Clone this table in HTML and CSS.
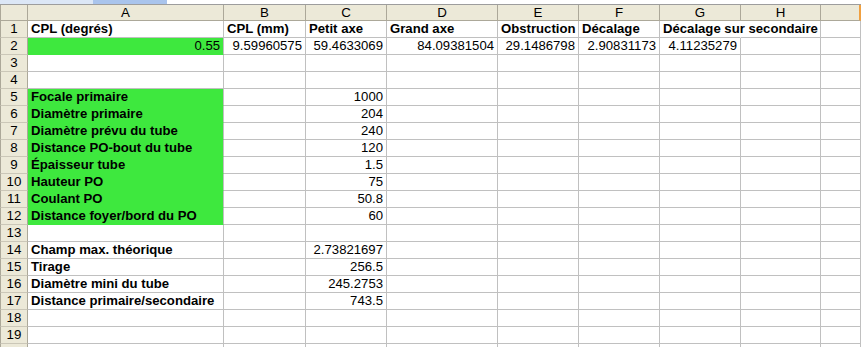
FILE: index.html
```html
<!DOCTYPE html>
<html lang="fr">
<head>
<meta charset="utf-8">
<title>Feuille</title>
<link rel="stylesheet" href="styles.css">
</head>
<body>
<div class="strip"><div class="tab-a"></div><div class="tab-b"></div></div>
<div class="sheet">
  <div class="ch corner"></div><div class="ch">A</div><div class="ch">B</div><div class="ch">C</div><div class="ch">D</div><div class="ch">E</div><div class="ch">F</div><div class="ch">G</div><div class="ch">H</div><div class="ch last"></div>

  <div class="rh">1</div><div class="c lbl">CPL (degrés)</div><div class="c lbl">CPL (mm)</div><div class="c lbl">Petit axe</div><div class="c lbl">Grand axe</div><div class="c lbl">Obstruction</div><div class="c lbl">Décalage</div><div class="c lbl wide spill">Décalage sur secondaire</div><div class="c"></div><div class="c"></div>

  <div class="rh">2</div><div class="c num green">0.55</div><div class="c num">9.59960575</div><div class="c num">59.4633069</div><div class="c num">84.09381504</div><div class="c num">29.1486798</div><div class="c num">2.90831173</div><div class="c num">4.11235279</div><div class="c"></div><div class="c"></div>

  <div class="rh">3</div><div class="c"></div><div class="c"></div><div class="c"></div><div class="c"></div><div class="c"></div><div class="c"></div><div class="c"></div><div class="c"></div><div class="c"></div>
  <div class="rh">4</div><div class="c"></div><div class="c"></div><div class="c"></div><div class="c"></div><div class="c"></div><div class="c"></div><div class="c"></div><div class="c"></div><div class="c"></div>

  <div class="rh">5</div><div class="c lbl green">Focale primaire</div><div class="c"></div><div class="c num">1000</div><div class="c"></div><div class="c"></div><div class="c"></div><div class="c"></div><div class="c"></div><div class="c"></div>
  <div class="rh">6</div><div class="c lbl green">Diamètre primaire</div><div class="c"></div><div class="c num">204</div><div class="c"></div><div class="c"></div><div class="c"></div><div class="c"></div><div class="c"></div><div class="c"></div>
  <div class="rh">7</div><div class="c lbl green">Diamètre prévu du tube</div><div class="c"></div><div class="c num">240</div><div class="c"></div><div class="c"></div><div class="c"></div><div class="c"></div><div class="c"></div><div class="c"></div>
  <div class="rh">8</div><div class="c lbl green">Distance PO-bout du tube</div><div class="c"></div><div class="c num">120</div><div class="c"></div><div class="c"></div><div class="c"></div><div class="c"></div><div class="c"></div><div class="c"></div>
  <div class="rh">9</div><div class="c lbl green">Épaisseur tube</div><div class="c"></div><div class="c num">1.5</div><div class="c"></div><div class="c"></div><div class="c"></div><div class="c"></div><div class="c"></div><div class="c"></div>
  <div class="rh">10</div><div class="c lbl green">Hauteur PO</div><div class="c"></div><div class="c num">75</div><div class="c"></div><div class="c"></div><div class="c"></div><div class="c"></div><div class="c"></div><div class="c"></div>
  <div class="rh">11</div><div class="c lbl green">Coulant PO</div><div class="c"></div><div class="c num">50.8</div><div class="c"></div><div class="c"></div><div class="c"></div><div class="c"></div><div class="c"></div><div class="c"></div>
  <div class="rh">12</div><div class="c lbl green">Distance foyer/bord du PO</div><div class="c"></div><div class="c num">60</div><div class="c"></div><div class="c"></div><div class="c"></div><div class="c"></div><div class="c"></div><div class="c"></div>

  <div class="rh">13</div><div class="c"></div><div class="c"></div><div class="c"></div><div class="c"></div><div class="c"></div><div class="c"></div><div class="c"></div><div class="c"></div><div class="c"></div>

  <div class="rh">14</div><div class="c lbl">Champ max. théorique</div><div class="c"></div><div class="c num">2.73821697</div><div class="c"></div><div class="c"></div><div class="c"></div><div class="c"></div><div class="c"></div><div class="c"></div>
  <div class="rh">15</div><div class="c lbl">Tirage</div><div class="c"></div><div class="c num">256.5</div><div class="c"></div><div class="c"></div><div class="c"></div><div class="c"></div><div class="c"></div><div class="c"></div>
  <div class="rh">16</div><div class="c lbl">Diamètre mini du tube</div><div class="c"></div><div class="c num">245.2753</div><div class="c"></div><div class="c"></div><div class="c"></div><div class="c"></div><div class="c"></div><div class="c"></div>
  <div class="rh">17</div><div class="c lbl">Distance primaire/secondaire</div><div class="c"></div><div class="c num">743.5</div><div class="c"></div><div class="c"></div><div class="c"></div><div class="c"></div><div class="c"></div><div class="c"></div>

  <div class="rh">18</div><div class="c"></div><div class="c"></div><div class="c"></div><div class="c"></div><div class="c"></div><div class="c"></div><div class="c"></div><div class="c"></div><div class="c"></div>
  <div class="rh">19</div><div class="c"></div><div class="c"></div><div class="c"></div><div class="c"></div><div class="c"></div><div class="c"></div><div class="c"></div><div class="c"></div><div class="c"></div>
  <div class="rh"></div><div class="c"></div><div class="c"></div><div class="c"></div><div class="c"></div><div class="c"></div><div class="c"></div><div class="c"></div><div class="c"></div><div class="c"></div>
</div>
</body>
</html>
```
FILE: styles.css
```css
html, body {
  margin: 0;
  padding: 0;
  background: #ffffff;
  overflow: hidden;
}
body {
  width: 861px;
  height: 347px;
  font-family: "Liberation Sans", Arial, sans-serif;
  font-size: 13.15px;
  color: #000000;
}
.strip {
  display: flex;
  height: 4px;
  background: #ffffff;
  overflow: hidden;
}
.tab-a {
  width: 93px;
  background: #dce7f6;
}
.tab-b {
  width: 74px;
  background: #a9c4ec;
}
.sheet {
  display: grid;
  grid-template-columns: 28px 196px 82px 81px 111px 81px 81px 81px 80px 1fr;
  grid-template-rows: 16px;
  grid-auto-rows: 17px;
  border-top: 1px solid #9d9d9d;
}
.ch, .rh, .c {
  box-sizing: border-box;
  border-right: 1px solid #c0c0c0;
  border-bottom: 1px solid #c0c0c0;
  white-space: nowrap;
  min-width: 0;
}
.ch {
  background: #ece9d8;
  border-right-color: #aca899;
  border-bottom-color: #aca899;
  text-align: center;
  line-height: 15px;
  font-size: 13.33px;
}
.ch.corner {
  border-left: 1px solid #aca899;
}
.ch.last {
  border-right: 2px solid #f0a040;
}
.rh {
  background: #ece9d8;
  border-left: 1px solid #aca899;
  border-right-color: #aca899;
  border-bottom-color: #cbc7b8;
  text-align: center;
  line-height: 16px;
  font-size: 13.33px;
}
.c {
  line-height: 16px;
  padding: 0 3px 0 3px;
  overflow: hidden;
}
.c.wide {
  overflow: visible;
  position: relative;
  z-index: 1;
}
.c.spill {
  border-right-color: #ffffff;
}
.lbl {
  font-weight: bold;
  text-align: left;
}
.num {
  text-align: right;
}
.green {
  background: #3ee83e;
  border-bottom-color: #3ee83e;
}
```
